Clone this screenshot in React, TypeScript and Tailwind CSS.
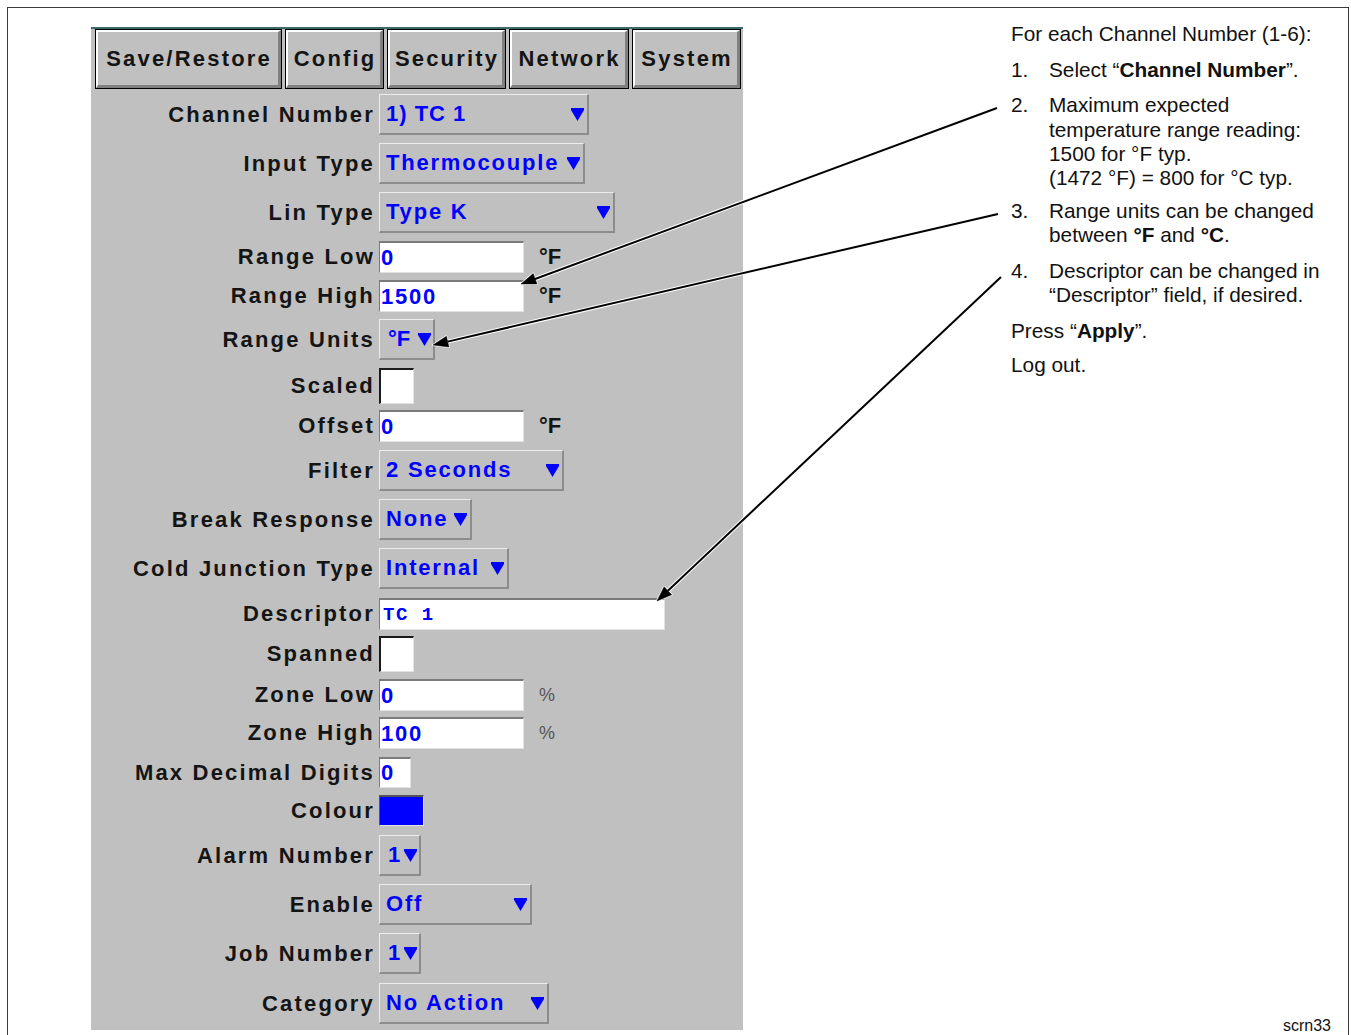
import React from "react";

const Arrow = () => (
  <svg width="13" height="13" viewBox="0 0 13 13" className="shrink-0 block">
    <polygon points="0,0 13,0 13,2 6.5,13 0,2" fill="#0000ff" />
  </svg>
);

const Select = ({ w, text, pad = "pl-[6px] pr-[3px]", tx = "" }: { w: string; text: string; pad?: string; tx?: string }) => (
  <div
    className={
      "flex items-center justify-between h-[41px] bg-[#c0c0c0] border-t border-l border-t-[#ececec] border-l-[#ececec] border-b-2 border-r-2 border-b-[#8c8c8c] border-r-[#8c8c8c] text-[#0000ff] " +
      pad +
      " " +
      w
    }
  >
    <span className={"whitespace-pre leading-[24px] " + tx}>{text}</span>
    <Arrow />
  </div>
);

const Input = ({ w, text, h = "h-[32px]" }: { w: string; text: string; h?: string }) => (
  <div
    className={
      "flex items-center bg-white pl-[1px] leading-[24px] tracking-[1.8px] border-t-2 border-l border-t-[#7a7a7a] border-l-[#7a7a7a] border-b border-r border-b-[#e2e2e2] border-r-[#e2e2e2] text-[#0000ff] " +
      w +
      " " +
      h
    }
  >
    {text}
  </div>
);

const Check = () => (
  <div className="w-[35px] h-[36px] bg-white border-t-2 border-l-2 border-t-[#1a1a1a] border-l-[#1a1a1a] border-b border-r border-b-[#e2e2e2] border-r-[#e2e2e2]" />
);

const Unit = ({ t }: { t: string }) => <span className="ml-[15px] tracking-normal leading-[24px]">{t}</span>;

const Pct = () => (
  <span className="ml-[15px] tracking-normal font-normal text-[18px] leading-[24px] text-[#555]">%</span>
);

type Row = { label: string; mt: string; h: string; ctl: React.ReactNode };

const rows: Row[] = [
  { label: "Channel Number", mt: "mt-[5px]", h: "h-[41px]", ctl: <Select w="w-[210px]" text="1) TC 1" tx="tracking-[1px]" /> },
  { label: "Input Type", mt: "mt-2", h: "h-[41px]", ctl: <Select w="w-[206px]" text="Thermocouple" tx="tracking-[1.8px]" /> },
  { label: "Lin Type", mt: "mt-2", h: "h-[41px]", ctl: <Select w="w-[236px]" text="Type K" tx="tracking-[1.8px]" /> },
  {
    label: "Range Low",
    mt: "mt-2",
    h: "h-[32px]",
    ctl: (
      <>
        <Input w="w-[145px]" text="0" />
        <Unit t="°F" />
      </>
    ),
  },
  {
    label: "Range High",
    mt: "mt-[7px]",
    h: "h-[32px]",
    ctl: (
      <>
        <Input w="w-[145px]" text="1500" />
        <Unit t="°F" />
      </>
    ),
  },
  {
    label: "Range Units",
    mt: "mt-[7px]",
    h: "h-[41px]",
    ctl: <Select w="w-[56px]" text="°F" pad="pl-[8px] pr-[2px]" tx="tracking-normal" />,
  },
  { label: "Scaled", mt: "mt-2", h: "h-[36px]", ctl: <Check /> },
  {
    label: "Offset",
    mt: "mt-[6px]",
    h: "h-[32px]",
    ctl: (
      <>
        <Input w="w-[145px]" text="0" />
        <Unit t="°F" />
      </>
    ),
  },
  { label: "Filter", mt: "mt-2", h: "h-[41px]", ctl: <Select w="w-[185px]" text="2 Seconds" tx="tracking-[1.8px]" /> },
  { label: "Break Response", mt: "mt-2", h: "h-[41px]", ctl: <Select w="w-[93px]" text="None" tx="tracking-[1.8px]" /> },
  { label: "Cold Junction Type", mt: "mt-2", h: "h-[41px]", ctl: <Select w="w-[130px]" text="Internal " tx="tracking-[1.8px]" /> },
  {
    label: "Descriptor",
    mt: "mt-[9px]",
    h: "h-[32px]",
    ctl: (
      <div className="flex items-center w-[286px] h-[32px] bg-white pl-[3px] leading-[24px] border-t-2 border-l border-t-[#7a7a7a] border-l-[#7a7a7a] border-b border-r border-b-[#e2e2e2] border-r-[#e2e2e2] text-[#0000ff] font-['Liberation_Mono',monospace] text-[19px] tracking-[1.5px] whitespace-pre">
        TC 1
      </div>
    ),
  },
  { label: "Spanned", mt: "mt-[6px]", h: "h-[36px]", ctl: <Check /> },
  {
    label: "Zone Low",
    mt: "mt-[7px]",
    h: "h-[32px]",
    ctl: (
      <>
        <Input w="w-[145px]" text="0" />
        <Pct />
      </>
    ),
  },
  {
    label: "Zone High",
    mt: "mt-[6px]",
    h: "h-[32px]",
    ctl: (
      <>
        <Input w="w-[145px]" text="100" />
        <Pct />
      </>
    ),
  },
  { label: "Max Decimal Digits", mt: "mt-2", h: "h-[31px]", ctl: <Input w="w-[32px]" h="h-[31px]" text="0" /> },
  {
    label: "Colour",
    mt: "mt-[7px]",
    h: "h-[31px]",
    ctl: (
      <div className="w-[45px] h-[31px] bg-[#0000ff] border-t-2 border-l border-t-[#555] border-l-[#555] border-b border-r border-b-[#e2e2e2] border-r-[#e2e2e2]" />
    ),
  },
  {
    label: "Alarm Number",
    mt: "mt-[9px]",
    h: "h-[41px]",
    ctl: <Select w="w-[42px]" text="1" pad="pl-[8px] pr-[2px]" tx="tracking-normal" />,
  },
  { label: "Enable", mt: "mt-2", h: "h-[41px]", ctl: <Select w="w-[153px]" text="Off" tx="tracking-[1.8px]" /> },
  {
    label: "Job Number",
    mt: "mt-2",
    h: "h-[41px]",
    ctl: <Select w="w-[42px]" text="1" pad="pl-[8px] pr-[2px]" tx="tracking-normal" />,
  },
  { label: "Category", mt: "mt-[9px]", h: "h-[41px]", ctl: <Select w="w-[170px]" text="No Action" tx="tracking-[1.8px]" /> },
];

const Tab = ({ w, t }: { w: string; t: string }) => (
  <div className={"h-[60px] border border-black " + w}>
    <div className="h-full flex items-center justify-center bg-[#c0c0c0] border-t-2 border-l-2 border-t-white border-l-white border-b-[3px] border-r-[3px] border-b-[#808080] border-r-[#808080]">
      <span className="mr-[-2.2px] leading-[24px]">{t}</span>
    </div>
  </div>
);

const Item = ({ n, children }: { n: string; children: React.ReactNode }) => (
  <div className="flex">
    <div className="w-[38px] shrink-0">{n}</div>
    <div>{children}</div>
  </div>
);

export default function App() {
  return (
    <div className="relative w-[1351px] h-[1035px] overflow-hidden bg-white font-['Liberation_Sans',Arial,sans-serif]">
      <div className="pt-[7px] pl-[7px] pr-[2px]">
        <div className="h-[1040px] border-l border-t border-r border-[#3a3a3a] flex">
          {/* Panel */}
          <div className="ml-[83px] mt-[19px] w-[652px] h-[1003px] shrink-0 overflow-hidden bg-[#c0c0c0] border-t-2 border-t-[#3d6b6b] flex flex-col font-bold text-[22px] leading-[24px] tracking-[2.2px] text-[#141414]">
            <div className="flex gap-[3px] pl-[4px] h-[60px] shrink-0">
              <Tab w="w-[187px]" t="Save/Restore" />
              <Tab w="w-[99px]" t="Config" />
              <Tab w="w-[119px]" t="Security" />
              <Tab w="w-[120px]" t="Network" />
              <Tab w="w-[109px]" t="System" />
            </div>
            {rows.map((r) => (
              <div key={r.label} className={"flex items-center shrink-0 " + r.mt + " " + r.h}>
                <div className="w-[284px] text-right leading-[24px] whitespace-nowrap">{r.label}</div>
                <div className="ml-[4px] flex items-center">{r.ctl}</div>
              </div>
            ))}
          </div>
          {/* Instructions */}
          <div className="ml-[268px] flex-1 flex flex-col pt-[14px] pb-[13px] pr-[17px] text-[20.8px] leading-[24px] text-[#111]">
            <div>For each Channel Number (1-6):</div>
            <div className="mt-[12px]">
              <Item n="1.">
                Select “<b>Channel Number</b>”.
              </Item>
            </div>
            <div className="mt-[11px]">
              <Item n="2.">
                <div>Maximum expected</div>
                <div className="mt-px">temperature range reading:</div>
                <div>1500 for °F typ.</div>
                <div>(1472 °F) = 800 for °C typ.</div>
              </Item>
            </div>
            <div className="mt-[9px]">
              <Item n="3.">
                <div>Range units can be changed</div>
                <div>
                  between <b>°F</b> and <b>°C</b>.
                </div>
              </Item>
            </div>
            <div className="mt-[12px]">
              <Item n="4.">
                <div>Descriptor can be changed in</div>
                <div>“Descriptor” field, if desired.</div>
              </Item>
            </div>
            <div className="mt-[12px]">
              Press “<b>Apply</b>”.
            </div>
            <div className="mt-[10px]">Log out.</div>
            <div className="mt-auto self-end text-[16px] leading-[16px]">scrn33</div>
          </div>
        </div>
      </div>

      {/* Callout arrows */}
      <svg className="absolute inset-0 pointer-events-none" width="1351" height="1035" viewBox="0 0 1351 1035">
        <g stroke="#fff" strokeWidth="4" fill="#fff" strokeLinejoin="round">
          <line x1="997" y1="108" x2="535" y2="279" />
          <polygon points="521,284 537,284 533.2,273.6" strokeWidth="2" />
          <line x1="998" y1="214" x2="447.6" y2="341.6" />
          <polygon points="433,345 448.9,347 446.4,336.2" strokeWidth="2" />
          <line x1="1001" y1="277" x2="667.9" y2="590.7" />
          <polygon points="657,601 671.7,594.7 664.1,586.7" strokeWidth="2" />
        </g>
        <g stroke="#000" strokeWidth="2" fill="#000">
          <line x1="997" y1="108" x2="535" y2="279" />
          <polygon points="521,284 537,284 533.2,273.6" strokeWidth="0.5" />
          <line x1="998" y1="214" x2="447.6" y2="341.6" />
          <polygon points="433,345 448.9,347 446.4,336.2" strokeWidth="0.5" />
          <line x1="1001" y1="277" x2="667.9" y2="590.7" />
          <polygon points="657,601 671.7,594.7 664.1,586.7" strokeWidth="0.5" />
        </g>
      </svg>
    </div>
  );
}
